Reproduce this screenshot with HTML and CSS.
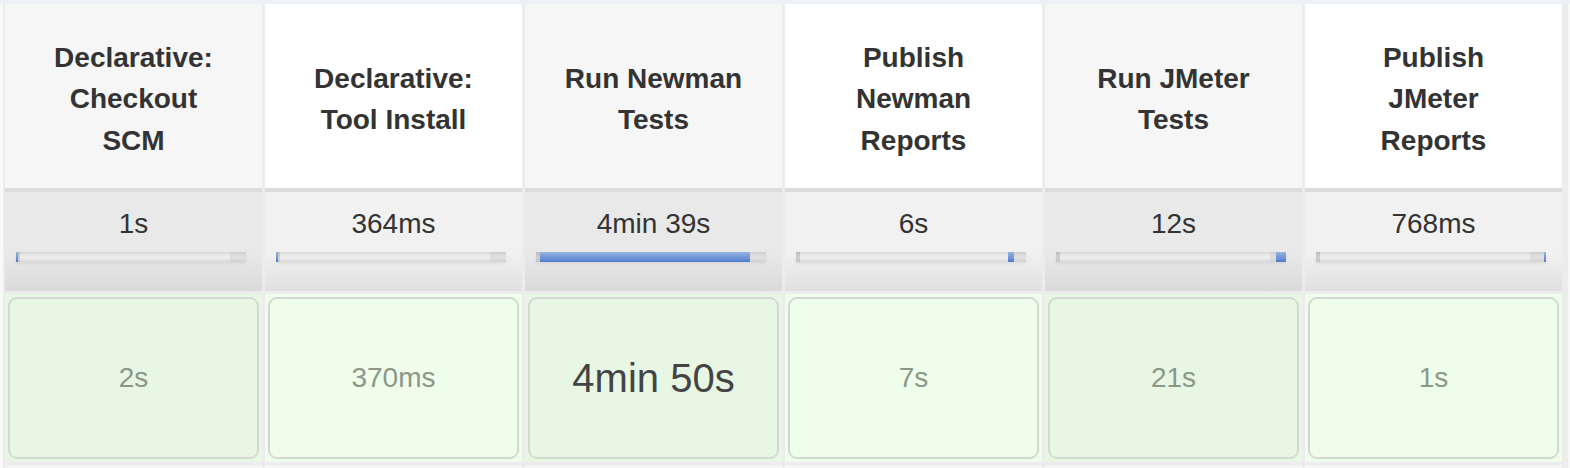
FILE: index.html
```html
<!DOCTYPE html>
<html lang="en">
<head>
<meta charset="utf-8">
<title>Stage View</title>
<link rel="stylesheet" href="styles.css">
</head>
<body>
<div class="topstrip"></div>
<div class="stages">
  <div class="head odd"><span>Declarative: Checkout SCM</span></div>
  <div class="head even"><span>Declarative: Tool Install</span></div>
  <div class="head odd"><span>Run Newman Tests</span></div>
  <div class="head even"><span>Publish Newman Reports</span></div>
  <div class="head odd"><span>Run JMeter Tests</span></div>
  <div class="head even"><span>Publish JMeter Reports</span></div>

  <div class="avg odd"><div class="avg-time">1s</div><div class="bar"><i class="cap"></i><i class="track"></i><i class="tail"></i><b class="fill" style="left:0;width:2px"></b></div></div>
  <div class="avg even"><div class="avg-time">364ms</div><div class="bar"><i class="cap"></i><i class="track"></i><i class="tail"></i><b class="fill" style="left:0;width:2px"></b></div></div>
  <div class="avg odd"><div class="avg-time">4min 39s</div><div class="bar"><i class="cap"></i><i class="track"></i><i class="tail"></i><b class="fill" style="left:4px;width:210px"></b></div></div>
  <div class="avg even"><div class="avg-time">6s</div><div class="bar"><i class="cap"></i><i class="track"></i><i class="tail"></i><b class="fill" style="left:212px;width:6px"></b></div></div>
  <div class="avg odd"><div class="avg-time">12s</div><div class="bar"><i class="cap"></i><i class="track"></i><i class="tail"></i><b class="fill" style="left:220px;width:10px"></b></div></div>
  <div class="avg even"><div class="avg-time">768ms</div><div class="bar"><i class="cap"></i><i class="track"></i><i class="tail"></i><b class="fill" style="left:228px;width:2px"></b></div></div>

  <div class="cell odd"><div class="box">2s</div></div>
  <div class="cell even"><div class="box">370ms</div></div>
  <div class="cell odd"><div class="box long">4min 50s</div></div>
  <div class="cell even"><div class="box">7s</div></div>
  <div class="cell odd"><div class="box">21s</div></div>
  <div class="cell even"><div class="box">1s</div></div>

  <div class="next"></div><div class="next"></div><div class="next"></div>
  <div class="next"></div><div class="next"></div><div class="next"></div>
</div>
</body>
</html>
```

FILE: styles.css
```css
html, body {
  margin: 0;
  padding: 0;
  background: #f9f9f9;
  font-family: "Liberation Sans", Arial, Helvetica, sans-serif;
  color: #333;
  overflow: hidden;
}

.topstrip {
  height: 4px;
  background: #edf0f4;
}

.stages {
  margin-left: 3px;
  width: 1560px;
  padding: 0 3px 0 2px;
  display: grid;
  grid-template-columns: repeat(6, 257px);
  grid-template-rows: 184px 106px 168px 20px;
  column-gap: 3px;
  row-gap: 0;
  background: #ececec;
}

.head {
  display: flex;
  align-items: center;
  justify-content: center;
  text-align: center;
  font-weight: bold;
  font-size: 28px;
  line-height: 41.5px;
  padding: 6px 34px 0;
}
.head.odd { background: #f6f6f6; }
.head.even { background: #ffffff; }

.avg {
  border-top: 4px solid #dcdcdc;
  padding-top: 16px;
  font-size: 28px;
  text-align: center;
  margin-bottom: 3px;
}
.avg.odd { background: linear-gradient(to bottom, #e9e9e9 0%, #e9e9e9 62%, #dadada 100%); }
.avg.even { background: linear-gradient(to bottom, #f1f1f1 0%, #f1f1f1 62%, #e0e0e0 100%); }

.avg-time {
  line-height: 32px;
}

.bar {
  position: relative;
  display: flex;
  margin: 12px 0 0 11px;
  width: 230px;
  height: 10px;
  box-shadow: 0 2px 3px rgba(0,0,0,0.06);
}
.bar i { display: block; height: 100%; }
.bar .cap {
  width: 4px;
  background: linear-gradient(to bottom, #bdbdbd, #cfcfcf 50%, #c4c4c4);
}
.bar .track {
  flex: 1;
  background: linear-gradient(to bottom, #d6d6d6 0%, #e6e6e6 25%, #eeeeee 55%, #e2e2e2 85%, #d4d4d4 100%);
}
.bar .tail {
  width: 16px;
  background: linear-gradient(to bottom, #cdcdcd 0%, #dcdcdc 30%, #e0e0e0 60%, #d0d0d0 100%);
}
.bar .fill {
  position: absolute;
  top: 0;
  height: 10px;
  background: linear-gradient(to bottom, #9bb5e0 0%, #7c9fd9 35%, #6790d6 70%, #4a78cf 100%);
}

.cell {
  padding: 3px;
}
.cell.odd { background: #e8f7e4; }
.cell.even { background: #effdeb; }

.box {
  height: 100%;
  box-sizing: border-box;
  border: 2px solid #d3d9d2;
  border-radius: 9px;
  display: flex;
  align-items: center;
  justify-content: center;
  font-size: 28px;
  color: #8a9888;
}
.box.long {
  font-size: 40px;
  color: #444;
}

.next {
  margin-top: 3px;
  background: #f5f5f5;
}
```
